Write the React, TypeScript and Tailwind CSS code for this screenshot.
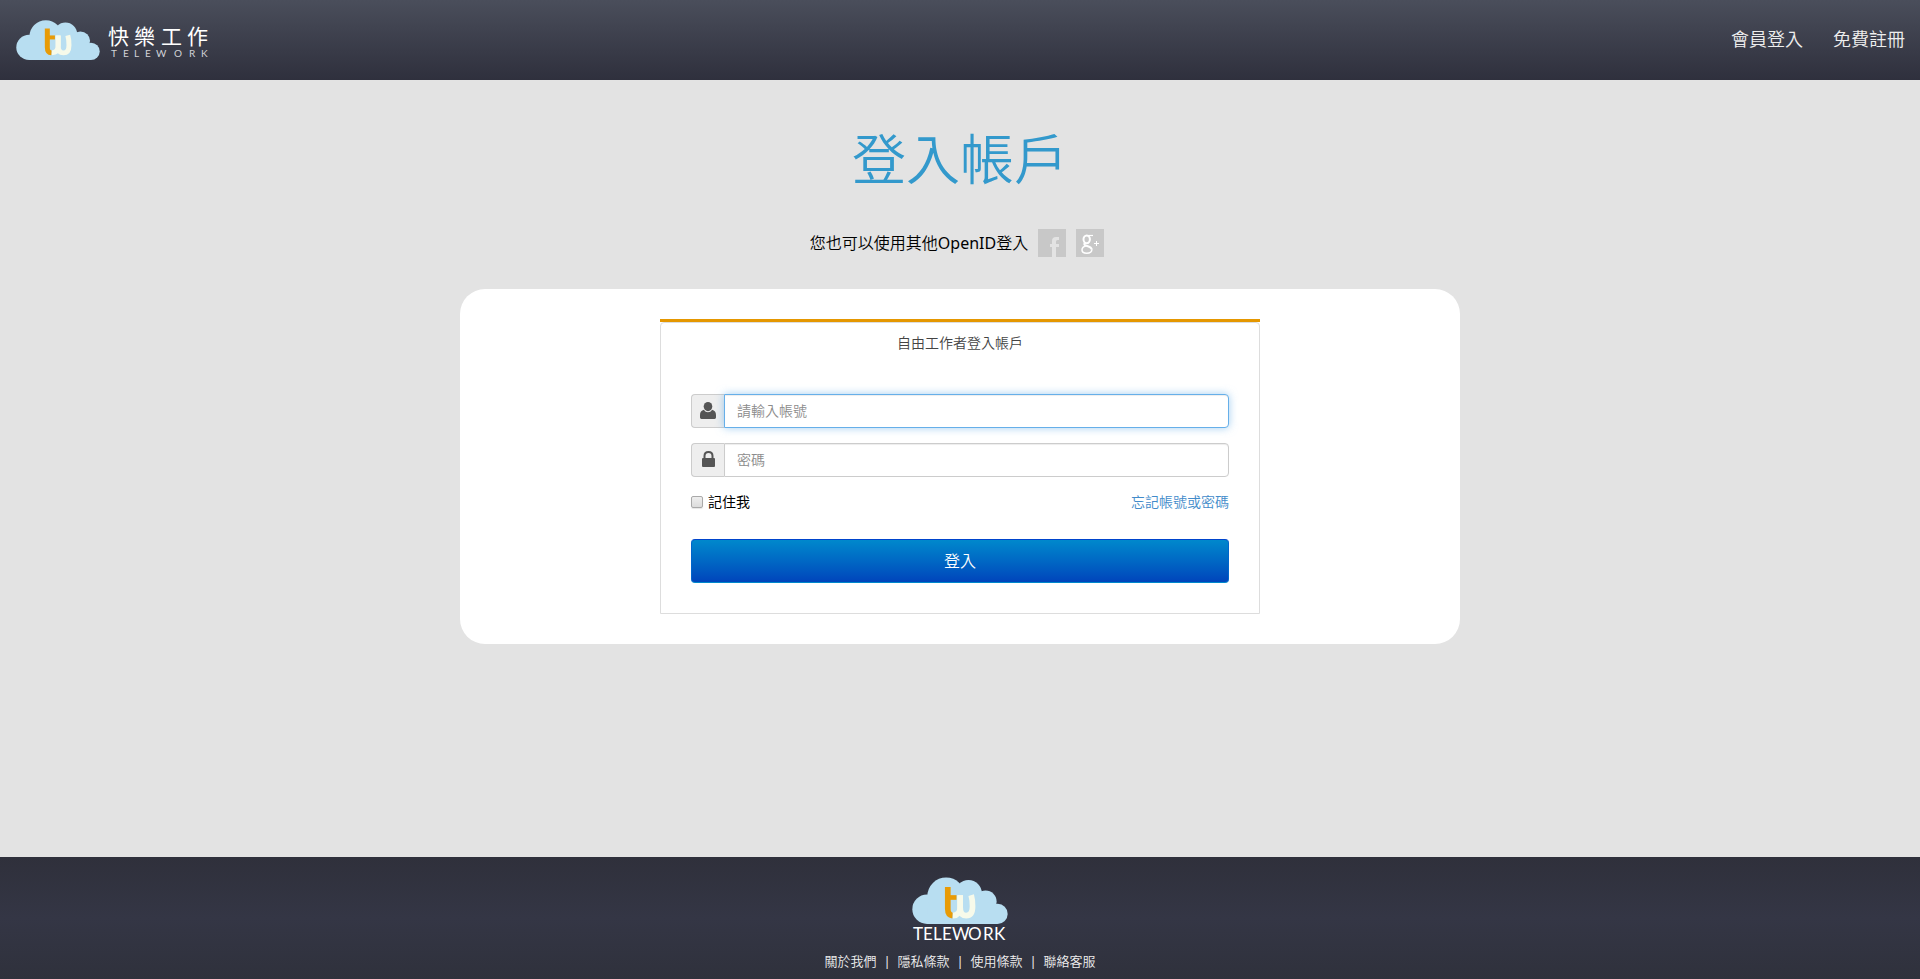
import React from "react";

function CloudMark() {
  return (
    <>
      <g fill="#b8def1">
        <circle cx="45" cy="96" r="44" />
        <circle cx="102" cy="57" r="56" />
        <circle cx="169" cy="49" r="40" />
        <circle cx="220" cy="73" r="33" />
        <circle cx="256" cy="110" r="30" />
        <path d="M45 140V90L100 50H180L225 75L256 110V140Z" />
      </g>
      <g fill="none">
        <path
          d="M144 54V90Q144 115 162 115Q181 115 181 88Q181 68 177 54"
          stroke="#f7faea"
          strokeWidth="17"
        />
        <path d="M144 54V90Q144 114 122 115" stroke="#f7faea" strokeWidth="17" />
        <path d="M107 30V95Q107 114 121 115" stroke="#e89b06" strokeWidth="17" />
        <path d="M107 61H133" stroke="#e89b06" strokeWidth="14" />
      </g>
    </>
  );
}

function HeaderLogo() {
  return (
    <svg
      width="196"
      height="40"
      viewBox="0 0 196 40"
      role="img"
      aria-label="快樂工作 TELEWORK"
      className="block"
    >
      <svg x="0" y="0" width="84" height="40" viewBox="0 0 287 140" preserveAspectRatio="none">
        <CloudMark />
      </svg>
      <text
        x="92 118 145 171"
        y="24"
        fill="#ffffff"
        className="font-['Noto_Sans_CJK_TC',sans-serif] text-[21px]"
      >
        快樂工作
      </text>
      <text
        x="95 107 118 129 140 158 173 185"
        y="37"
        fill="#d2d3d8"
        className="font-[Lato,sans-serif] text-[10px]"
      >
        TELEWORK
      </text>
    </svg>
  );
}

function FooterLogo() {
  return (
    <svg
      width="96"
      height="66"
      viewBox="0 0 96 66"
      role="img"
      aria-label="TELEWORK"
      className="block"
    >
      <svg x="0" y="0" width="96" height="47" viewBox="0 0 287 140">
        <CloudMark />
      </svg>
      <text
        x="1 11 21 30 40 56 71 82"
        y="63"
        fill="#ffffff"
        className="font-[Lato,sans-serif] text-[17px]"
      >
        TELEWORK
      </text>
    </svg>
  );
}

function UserIcon() {
  return (
    <svg width="16" height="17" viewBox="0 0 16 17" fill="#555555" aria-hidden="true">
      <ellipse cx="8" cy="4.6" rx="4.3" ry="4.6" />
      <path d="M4 7.8C5 9.6 6.4 10.3 8 10.3S11 9.6 12 7.8C14.6 8.4 16 10.2 16 13V15.6Q16 17 14.6 17H1.4Q0 17 0 15.6V13C0 10.2 1.4 8.4 4 7.8Z" />
    </svg>
  );
}

function LockIcon() {
  return (
    <svg width="13" height="16" viewBox="0 0 13 16" aria-hidden="true">
      <path d="M2.5 8V5Q2.5 1 6.5 1T10.5 5V8" fill="none" stroke="#555555" strokeWidth="2" />
      <rect y="7" width="13" height="9" rx="1" fill="#555555" />
    </svg>
  );
}

const footerLinks = ["關於我們", "隱私條款", "使用條款", "聯絡客服"];

const fieldBase =
  "h-[34px] min-w-0 flex-1 rounded-r border bg-white px-3 pb-[2px] text-sm font-[350] text-[#555] outline-none placeholder:text-[#8c8c8c] placeholder:opacity-100";

const addonBase =
  "flex w-[33px] items-center justify-center rounded-l border border-r-0 border-[#cccccc] bg-[#eeeeee] pb-[2px]";

export default function App() {
  return (
    <div className="flex min-h-screen flex-col bg-[#e3e3e3] font-['Noto_Sans','Noto_Sans_CJK_TC',sans-serif] text-black">
      <header className="flex h-20 items-center justify-between bg-linear-to-b from-[#4a4e5b] to-[#2f303d] pr-[15px] pl-4">
        <a href="#">
          <HeaderLogo />
        </a>
        <nav className="flex gap-[30px] pb-[2px] text-lg font-[350] text-[#eeeeee]">
          <a href="#">會員登入</a>
          <a href="#">免費註冊</a>
        </nav>
      </header>

      <main className="flex flex-1 flex-col items-center pt-[46px]">
        <h1 className="text-[54px] leading-[66px] font-[350] text-[#3399cc]">登入帳戶</h1>

        <div className="mt-[37px] flex items-center gap-[10px] pr-[6px]">
          <p className="text-base font-[350]">
            您也可以使用其他<span className="font-normal">OpenID</span>登入
          </p>
          <a href="#" aria-label="Facebook">
            <svg width="28" height="28" viewBox="0 0 28 28" className="block">
              <path d="M0 0H28V28H0Z" fill="#c8c8c8" />
              <path
                d="M14 28V18H12V15H14V12Q14 8 18 8H21V11H19.5Q18 11 18 12.5V15H21V18H18V28Z"
                fill="#e3e3e3"
              />
            </svg>
          </a>
          <a href="#" aria-label="Google+">
            <svg width="28" height="28" viewBox="0 0 28 28" fill="none" className="block">
              <path d="M0 0H28V28H0Z" fill="#c8c8c8" />
              <g stroke="#ffffff">
                <ellipse cx="10.7" cy="10.3" rx="3.2" ry="3.9" strokeWidth="2" />
                <path d="M10.5 6.5H17" strokeWidth="1.2" />
                <path d="M9 13.8Q7 15.6 10.5 16.8Q15.8 18.3 15.8 20.8" strokeWidth="2" />
                <path
                  d="M10.5 16.8Q6 17.8 6 21Q6 24.2 10.7 24.2Q15.8 24.2 15.8 20.8"
                  strokeWidth="1.5"
                />
                <path d="M18 14.5H23M20.5 12V17" strokeWidth="1" />
              </g>
            </svg>
          </a>
        </div>

        <section className="mt-8 mb-8 w-full max-w-[1000px] rounded-[25px] bg-white px-5 py-[30px]">
          <div className="mx-auto max-w-[600px] border-t-[3px] border-[#e59700]">
            <form
              className="rounded-t border border-[#dddddd] px-[30px] pb-[30px]"
              onSubmit={(e) => e.preventDefault()}
            >
              <h2 className="pt-[10px] text-center text-sm leading-5 font-[350] text-[#444444]">
                自由工作者登入帳戶
              </h2>

              <div className="mt-[41px] flex">
                <label htmlFor="account" aria-label="帳號" className={addonBase}>
                  <UserIcon />
                </label>
                <input
                  id="account"
                  type="text"
                  placeholder="請輸入帳號"
                  className={`${fieldBase} border-[#66afe9] shadow-[inset_0_1px_1px_rgba(0,0,0,0.075),0_0_8px_rgba(102,175,233,0.6)]`}
                />
              </div>

              <div className="mt-[15px] flex">
                <label htmlFor="password" aria-label="密碼" className={addonBase}>
                  <LockIcon />
                </label>
                <input
                  id="password"
                  type="password"
                  placeholder="密碼"
                  className={`${fieldBase} border-[#cccccc] shadow-[inset_0_1px_1px_rgba(0,0,0,0.075)]`}
                />
              </div>

              <div className="mt-[15px] flex items-center justify-between text-sm leading-5">
                <label className="flex items-start gap-[5px]">
                  <input
                    type="checkbox"
                    className="mt-1 h-3 w-3 appearance-none rounded-xs border border-[#a9a9a9] bg-linear-to-b from-[#eeeeee] to-[#dcdcdc] shadow-[0_1px_1px_rgba(0,0,0,0.1)] checked:bg-[#3399cc]"
                  />
                  <span>記住我</span>
                </label>
                <a href="#" className="font-[350] text-[#428bca]">
                  忘記帳號或密碼
                </a>
              </div>

              <button
                type="submit"
                className="mt-[27px] block h-11 w-full rounded border border-t-[#0044cc] border-r-[#0066cc] border-b-[#0088cc] border-l-[#0066cc] bg-linear-to-b from-[#0088cc] to-[#0044bb] text-base font-[350] text-white"
              >
                登入
              </button>
            </form>
          </div>
        </section>
      </main>

      <footer className="flex h-[122px] flex-col items-center bg-linear-to-b from-[#2f303b] via-[#343645] to-[#2f313c] pt-5">
        <FooterLogo />
        <nav className="mt-2 flex items-center text-[13px] leading-5 font-[350] text-[#eeeeee]">
          {footerLinks.map((label, i) => (
            <React.Fragment key={label}>
              {i > 0 && <span className="w-[21px] text-center font-normal">|</span>}
              <a href="#">{label}</a>
            </React.Fragment>
          ))}
        </nav>
      </footer>
    </div>
  );
}
